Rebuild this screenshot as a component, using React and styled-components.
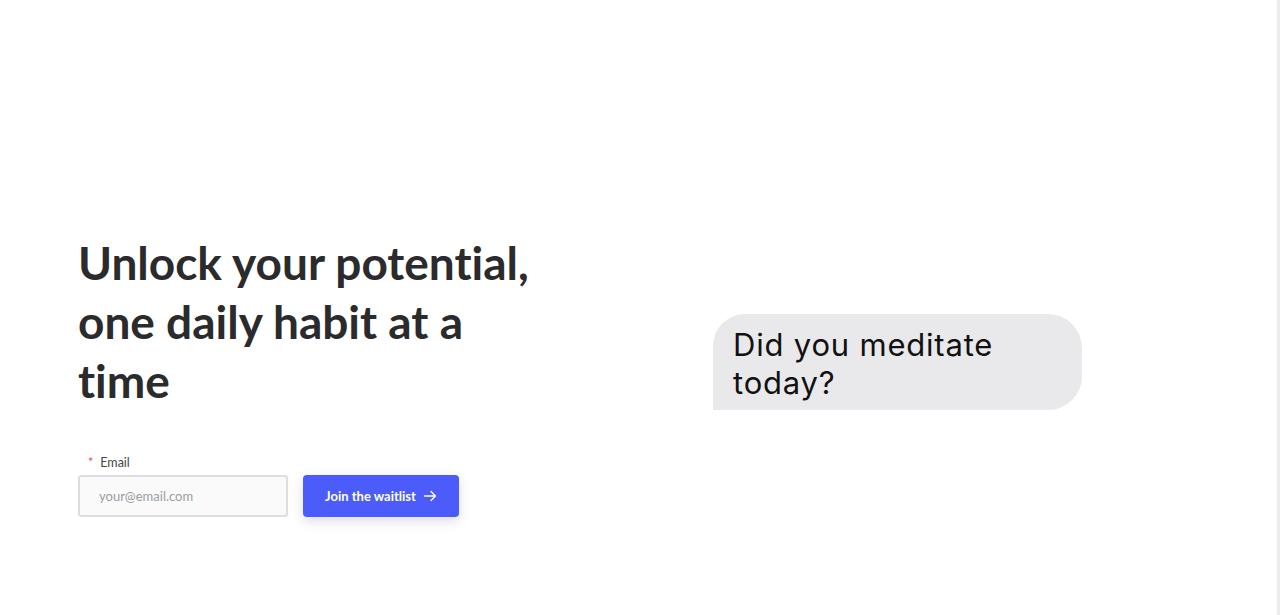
import styled, { createGlobalStyle } from "styled-components";

const GlobalStyle = createGlobalStyle`
  * { box-sizing: border-box; }
  body {
    margin: 0;
    background: #ffffff;
    font-family: "Lato", "Liberation Sans", sans-serif;
    font-variant-ligatures: none;
  }
`;

const Page = styled.div`
  height: 615px;
  border-right: 3px solid #ececec;
  padding-top: 135px;
  display: grid;
  grid-template-columns: 640px 1fr;
  align-items: center;
`;

const Left = styled.section`
  padding-left: 78px;
  display: flex;
  flex-direction: column;
`;

const Heading = styled.h1`
  margin: 0;
  max-width: 470px;
  font-family: "Lato", sans-serif;
  font-weight: 700;
  font-size: 46px;
  line-height: 59px;
  color: #2b2b2d;
  font-variant-ligatures: none;
`;

const Form = styled.form`
  margin-top: 45px;
  display: flex;
  flex-direction: column;
`;

const Label = styled.label`
  display: flex;
  gap: 7px;
  padding-left: 10px;
  font-size: 12.5px;
  line-height: 16px;
  color: #444;
  margin-bottom: 4px;

  span {
    color: #e5484d;
  }
`;

const Row = styled.div`
  display: flex;
  gap: 15px;
`;

const Input = styled.input`
  width: 210px;
  height: 42px;
  padding: 0 19px;
  border: 2px solid #dcdde2;
  border-radius: 3px;
  background: #fafafb;
  font-family: "Lato", sans-serif;
  font-size: 13px;
  color: #333;
  outline: none;

  &::placeholder {
    color: #9a9ca3;
  }
`;

const Button = styled.button`
  width: 156px;
  height: 42px;
  border: none;
  border-radius: 4px;
  background: #4b5cfa;
  color: #fff;
  font-family: "Lato", sans-serif;
  font-weight: 700;
  font-size: 13px;
  display: flex;
  align-items: center;
  justify-content: center;
  gap: 7px;
  box-shadow: 0 4px 12px rgba(60, 70, 120, 0.18);
  cursor: pointer;
`;

const Right = styled.section`
  padding-left: 73px;
  margin-bottom: 26px;
`;

const Bubble = styled.div`
  width: 369px;
  height: 96px;
  padding: 12px 20px 0;
  background: #e9e9eb;
  border-radius: 32px 34px 34px 0;
  font-family: "Inter", "Liberation Sans", sans-serif;
  font-size: 31px;
  letter-spacing: 0.8px;
  line-height: 38px;
  color: #111;
`;

const Arrow = () => (
  <svg width="14" height="14" viewBox="0 0 14 14" fill="none" stroke="#fff" strokeWidth="1.4" strokeLinecap="round" strokeLinejoin="round">
    <path d="M1.5 7h11M8 2.5L12.5 7 8 11.5" />
  </svg>
);

export default function App() {
  return (
    <>
      <GlobalStyle />
      <Page>
        <Left>
          <Heading>Unlock your potential, one daily habit at a time</Heading>
          <Form onSubmit={(e) => e.preventDefault()}>
            <Label htmlFor="email">
              <span>*</span>Email
            </Label>
            <Row>
              <Input id="email" type="email" placeholder="your@email.com" />
              <Button type="submit">
                Join the waitlist <Arrow />
              </Button>
            </Row>
          </Form>
        </Left>
        <Right>
          <Bubble>Did you meditate today?</Bubble>
        </Right>
      </Page>
    </>
  );
}
